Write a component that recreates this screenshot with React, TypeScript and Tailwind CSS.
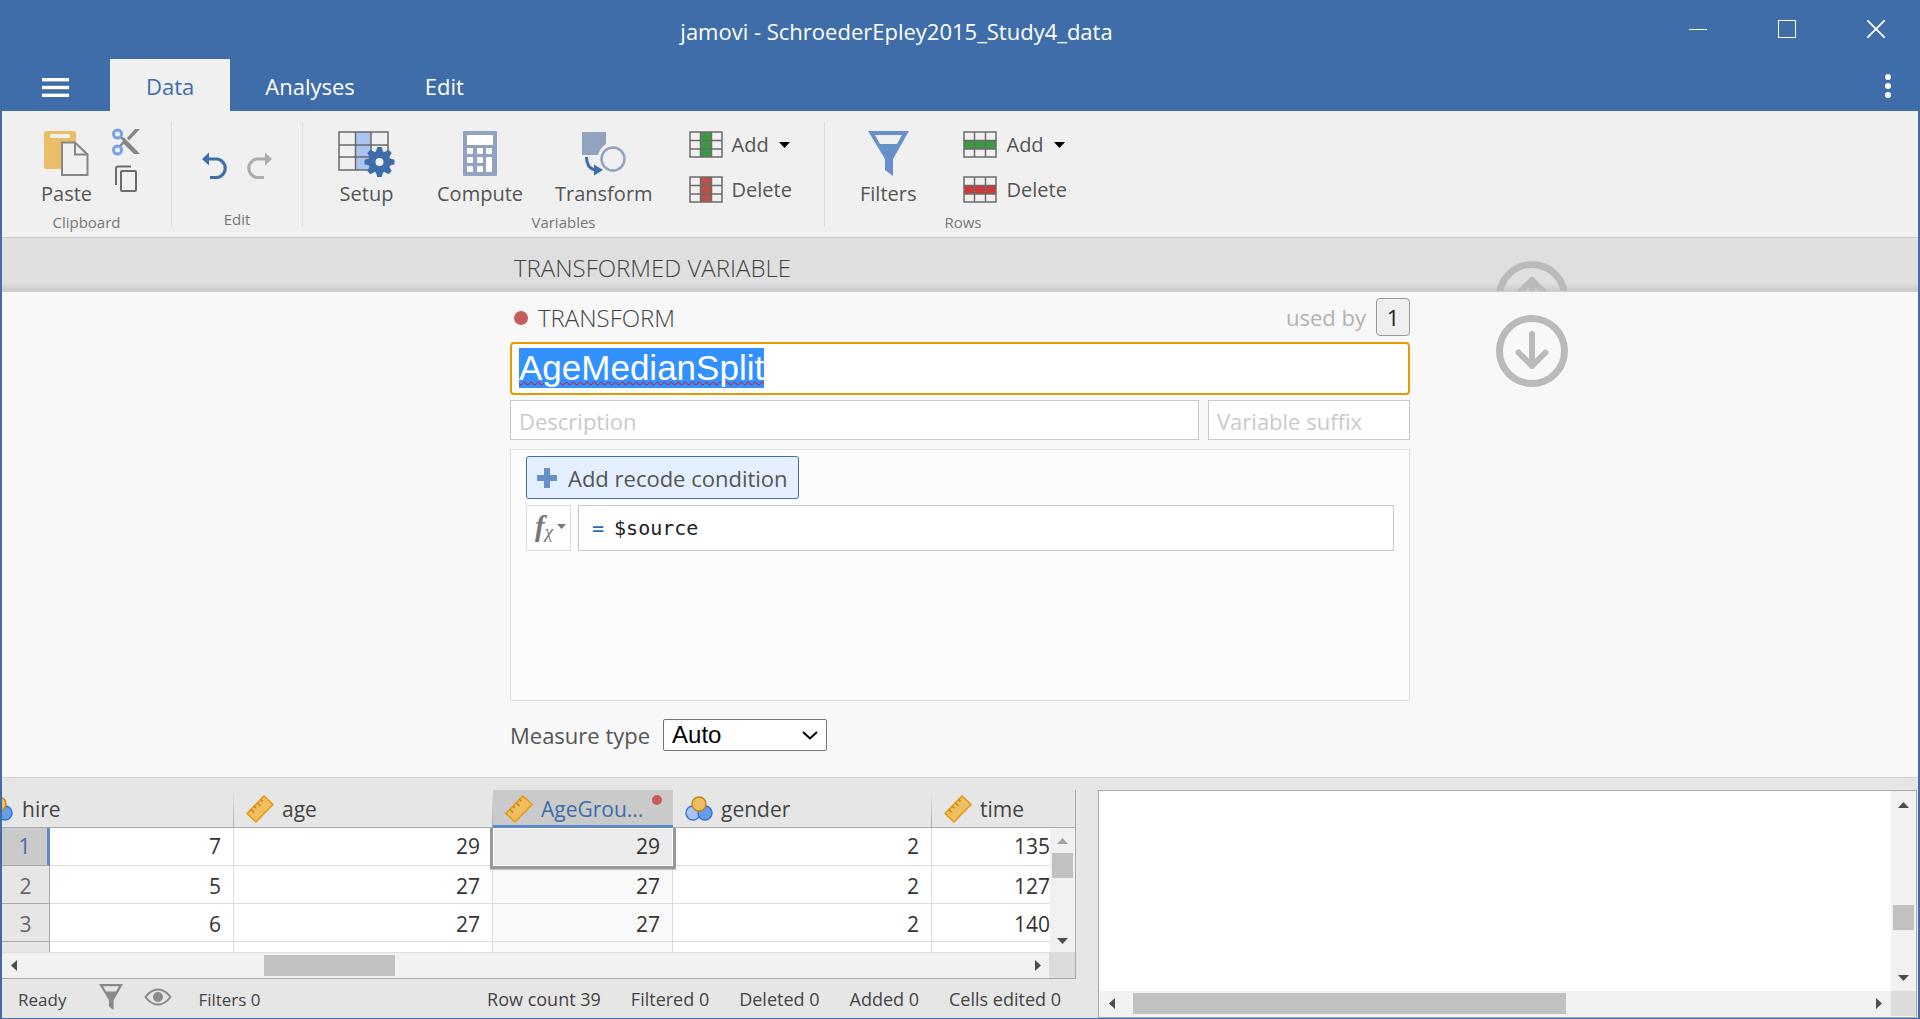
import React, { useEffect, useRef } from "react";

const SANS = "font-['Open_Sans','Noto_Sans',sans-serif]";

/* ---------- icons ---------- */

function PasteIcon() {
  return (
    <svg width="46" height="45" viewBox="0 0 46 45">
      <rect x="0" y="0" width="32" height="38" rx="2" fill="#eabd68" />
      <rect x="6" y="3" width="20" height="4" rx="1" fill="#f4f1ea" />
      <path d="M18 11.500H31L43.500 23.500V44H18Z" fill="#f0f0f0" stroke="#868686" strokeWidth="2" />
      <path d="M31 11.500V23.500H43.500" fill="none" stroke="#868686" strokeWidth="2" />
    </svg>
  );
}

function CutIcon() {
  return (
    <svg width="28" height="28" viewBox="0 0 28 28">
      <path d="M9 8L13 10.500L28 26H22L12 16L9 18.500L7.500 17L11 13L7.500 9.500Z" fill="#868686" />
      <path d="M15 10L23 1H28L17 12.500Z" fill="#868686" />
      <circle cx="5.500" cy="6" r="4" fill="none" stroke="#74a2e6" strokeWidth="3" />
      <circle cx="5.500" cy="22" r="4" fill="none" stroke="#74a2e6" strokeWidth="3" />
    </svg>
  );
}

function CopyIcon() {
  return (
    <svg width="24" height="28" viewBox="0 0 24 28" fill="none" stroke="#6c6c6c" strokeWidth="2">
      <path d="M17 1.500H4Q2 1.500 2 3.500V20" />
      <rect x="7" y="6" width="15" height="20" rx="1" />
    </svg>
  );
}

function UndoIcon({ flip = false }: { flip?: boolean }) {
  const c = flip ? "#acacac" : "#3e6da9";
  return (
    <svg width="27" height="28" viewBox="0 0 27 28">
      <g transform={flip ? "translate(27 0) scale(-1 1)" : undefined}>
        <path d="M5 7H15.500A9.400 9.400 0 0 1 15.500 25.500H8" fill="none" stroke={c} strokeWidth="3.200" />
        <path d="M0 7L7 0.500V13.500Z" fill={c} />
      </g>
    </svg>
  );
}

function SetupIcon() {
  const teeth = [0, 45, 90, 135, 180, 225, 270, 315];
  return (
    <svg width="57" height="46" viewBox="0 0 57 46">
      <rect x="17" y="1" width="16" height="38" fill="#a9c4f0" />
      <path d="M1 1H50V39H1ZM1 14H50M1 26H50M17.500 1V39M33 1V39" fill="none" stroke="#696969" strokeWidth="1.500" />
      <g transform="translate(41.500 31)">
        {teeth.map((a) => (
          <path key={a} d="M-4 -9L-2.200 -15H2.200L4 -9Z" fill="#3e6da9" transform={`rotate(${a})`} />
        ))}
        <circle r="7.500" fill="#f0f0f0" stroke="#3e6da9" strokeWidth="7" />
      </g>
    </svg>
  );
}

function ComputeIcon() {
  return (
    <svg width="34" height="45" viewBox="0 0 34 45">
      <rect width="34" height="45" rx="1" fill="#91a3bf" />
      <g fill="#fff">
        <rect x="4" y="4" width="26" height="10" />
        <rect x="4" y="17" width="6" height="6" rx="1" />
        <rect x="14" y="17" width="6" height="6" rx="1" />
        <rect x="23" y="17" width="6" height="6" rx="1" />
        <rect x="4" y="26" width="6" height="6" rx="1" />
        <rect x="14" y="26" width="6" height="6" rx="1" />
        <rect x="4" y="35" width="6" height="6" rx="1" />
        <rect x="14" y="35" width="6" height="6" rx="1" />
        <rect x="23" y="26" width="6" height="15" rx="1" />
      </g>
    </svg>
  );
}

function TransformIcon() {
  return (
    <svg width="44" height="45" viewBox="0 0 44 45">
      <path d="M0 1H24V13Q18 17 16 24H0Z" fill="#91a3bf" />
      <circle cx="31" cy="28" r="11.500" fill="none" stroke="#91a3bf" strokeWidth="2.500" />
      <path d="M4.500 26Q4.500 37 13 39" fill="none" stroke="#3e6da9" strokeWidth="3" />
      <path d="M12 33.500L21 39L12 44.500Z" fill="#3e6da9" />
    </svg>
  );
}

function ColumnsIcon({ color }: { color: string }) {
  return (
    <svg width="34" height="27" viewBox="0 0 34 27">
      <rect x="12" y="1" width="10" height="25" fill={color} />
      <path d="M1 1H33V26H1ZM1 9.500H33M1 18H33M11.500 1V26M22.500 1V26" fill="none" stroke="#6b6b6b" strokeWidth="1.500" />
    </svg>
  );
}

function RowsIcon({ color }: { color: string }) {
  return (
    <svg width="34" height="27" viewBox="0 0 34 27">
      <rect x="1" y="10" width="32" height="8" fill={color} />
      <path d="M1 1H33V26H1ZM1 9.500H33M1 18H33M11.500 1V26M22.500 1V26" fill="none" stroke="#6b6b6b" strokeWidth="1.500" />
    </svg>
  );
}

function FunnelIcon({ w, h, color }: { w: number; h: number; color: string }) {
  return (
    <svg width={w} height={h} viewBox="0 0 41 45" preserveAspectRatio="none">
      <path fillRule="evenodd" fill={color} d="M0 0H41L25 28V45L17 39V28ZM7 4L12 13H29L34 4Z" />
    </svg>
  );
}

function EyeIcon() {
  return (
    <svg width="28" height="18" viewBox="0 0 28 18">
      <path d="M1.500 9Q7 1.500 14 1.500T26.500 9Q21 16.500 14 16.500T1.500 9Z" fill="none" stroke="#8a8a8a" strokeWidth="2" />
      <circle cx="14" cy="9" r="5" fill="#8a8a8a" />
    </svg>
  );
}

function RulerIcon() {
  return (
    <svg width="28" height="28" viewBox="0 0 28 28" className="shrink-0">
      <path d="M1 18.500L18 1L27 9.500L10 27Z" fill="#f1bd62" stroke="#e59a12" strokeWidth="1.600" strokeLinejoin="round" />
      <path d="M4.800 14.500L8 17.500M8.100 11.200L10 13M11.400 7.900L14.600 11M14.600 4.600L16.500 6.400" stroke="#c98208" strokeWidth="1.400" />
    </svg>
  );
}

function NominalIcon() {
  return (
    <svg width="28" height="26" viewBox="0 0 28 26" className="shrink-0">
      <circle cx="8" cy="17" r="7" fill="#a9c4f5" stroke="#3472d8" strokeWidth="1.400" />
      <circle cx="20" cy="17" r="7" fill="#6a9ce8" stroke="#3472d8" strokeWidth="1.400" />
      <circle cx="14" cy="8" r="7" fill="#f1bd62" stroke="#bf8410" strokeWidth="1.400" />
    </svg>
  );
}

function CircleArrow({ up = false }: { up?: boolean }) {
  return (
    <svg width="72" height="72" viewBox="0 0 72 72" className="block" fill="none" stroke="#bababa">
      <circle cx="36" cy="36" r="32.500" strokeWidth="7" />
      <path
        d="M36 19V51M22.500 37.500L36 51L49.500 37.500"
        strokeWidth="6"
        strokeLinecap="round"
        strokeLinejoin="round"
        transform={up ? "rotate(180 36 35)" : undefined}
      />
    </svg>
  );
}

function Triangle({ dir, color = "#4d4d4d" }: { dir: "up" | "down" | "left" | "right"; color?: string }) {
  const shapes = {
    up: { w: 11, h: 6, d: "M0 6L5.500 0L11 6Z" },
    down: { w: 11, h: 6, d: "M0 0H11L5.500 6Z" },
    left: { w: 6, h: 11, d: "M6 0V11L0 5.500Z" },
    right: { w: 6, h: 11, d: "M0 0V11L6 5.500Z" },
  };
  const s = shapes[dir];
  return (
    <svg width={s.w} height={s.h} viewBox={`0 0 ${s.w} ${s.h}`} className="block shrink-0">
      <path d={s.d} fill={color} />
    </svg>
  );
}

/* ---------- ribbon ---------- */

function BigButton({ label, children }: { label: string; children: React.ReactNode }) {
  return (
    <button className="flex flex-col items-center">
      <span className="flex h-[45px] items-start">{children}</span>
      <span className="mt-1.5 text-[20px] leading-6 text-[#555]">{label}</span>
    </button>
  );
}

function SmallButton({ label, icon, menu = false }: { label: string; icon: React.ReactNode; menu?: boolean }) {
  return (
    <button className="flex h-[27px] items-center text-[20px] leading-[27px] text-[#555]">
      {icon}
      <span className="ml-[9px]">{label}</span>
      {menu && (
        <span className="ml-2.5">
          <Triangle dir="down" color="#000" />
        </span>
      )}
    </button>
  );
}

function GroupLabel({ children }: { children: React.ReactNode }) {
  return <div className="mt-1.5 text-center text-[15px] leading-5 text-[#777]">{children}</div>;
}

function Divider() {
  return <div className="h-[105px] w-px shrink-0 bg-[#dcdcdc]" />;
}

function Ribbon() {
  return (
    <div className="flex border-b border-[#c8c8c8] bg-[#f0f0f0] pt-[11px] pb-[5px]">
      <div className="w-[169px] shrink-0 pt-[9px]">
        <div className="flex pl-[39px]">
          <BigButton label="Paste">
            <PasteIcon />
          </BigButton>
          <div className="-mt-[3px] ml-5 flex flex-col gap-[9px]">
            <button aria-label="Cut">
              <CutIcon />
            </button>
            <button aria-label="Copy" className="pl-[2px]">
              <CopyIcon />
            </button>
          </div>
        </div>
        <GroupLabel>Clipboard</GroupLabel>
      </div>
      <Divider />
      <div className="w-[130px] shrink-0 pt-[9px]">
        <div className="flex h-[72px] items-center justify-center gap-4 pb-[3px]">
          <button aria-label="Undo">
            <UndoIcon />
          </button>
          <button aria-label="Redo">
            <UndoIcon flip />
          </button>
        </div>
        <GroupLabel>Edit</GroupLabel>
      </div>
      <Divider />
      <div className="w-[521px] shrink-0 pt-[9px]">
        <div className="flex pl-[35px]">
          <BigButton label="Setup">
            <SetupIcon />
          </BigButton>
          <div className="ml-[42px]">
            <BigButton label="Compute">
              <ComputeIcon />
            </BigButton>
          </div>
          <div className="ml-8">
            <BigButton label="Transform">
              <TransformIcon />
            </BigButton>
          </div>
          <div className="ml-9 flex flex-col gap-[18px]">
            <SmallButton label="Add" menu icon={<ColumnsIcon color="#3a9a41" />} />
            <SmallButton label="Delete" icon={<ColumnsIcon color="#bd5046" />} />
          </div>
        </div>
        <GroupLabel>Variables</GroupLabel>
      </div>
      <Divider />
      <div className="w-[276px] shrink-0 pt-[9px]">
        <div className="flex pl-[35px]">
          <BigButton label="Filters">
            <FunnelIcon w={41} h={45} color="#6690c8" />
          </BigButton>
          <div className="ml-[47px] flex flex-col gap-[18px]">
            <SmallButton label="Add" menu icon={<RowsIcon color="#3a9a41" />} />
            <SmallButton label="Delete" icon={<RowsIcon color="#d03838" />} />
          </div>
        </div>
        <GroupLabel>Rows</GroupLabel>
      </div>
    </div>
  );
}

/* ---------- title bar and tabs ---------- */

function TitleBar() {
  return (
    <header className="bg-[#3e6da9] text-white">
      <div className="flex h-[59px] items-start pl-[140px]">
        <h1 className="flex-1 pt-[15px] text-center text-[22px] leading-8">jamovi - SchroederEpley2015_Study4_data</h1>
        <div className="flex pt-5">
          <button aria-label="Minimize" className="flex w-[89px] justify-center">
            <svg width="18" height="18" viewBox="0 0 18 18">
              <path d="M0 9.500H18" stroke="#fff" />
            </svg>
          </button>
          <button aria-label="Maximize" className="flex w-[89px] justify-center">
            <svg width="18" height="18" viewBox="0 0 18 18">
              <rect x="0.500" y="0.500" width="17" height="17" fill="none" stroke="#fff" />
            </svg>
          </button>
          <button aria-label="Close" className="flex w-[89px] justify-center">
            <svg width="18" height="18" viewBox="0 0 18 18">
              <path d="M0 0L18 18M18 0L0 18" stroke="#fff" strokeWidth="1.800" />
            </svg>
          </button>
        </div>
      </div>
      <div className="flex h-[52px] text-[22px] leading-[30px]">
        <button aria-label="Menu" className="flex w-[110px] items-center pt-1 pl-[42px]">
          <svg width="27" height="19" viewBox="0 0 27 19" fill="#fff">
            <rect width="27" height="3.400" />
            <rect y="7.800" width="27" height="3.400" />
            <rect y="15.600" width="27" height="3.400" />
          </svg>
        </button>
        <button className="bg-[#f0f0f0] px-9 pt-0.5 text-[#3e6da9]">Data</button>
        <button className="px-[35px] pt-0.5">Analyses</button>
        <button className="px-[35px] pt-0.5">Edit</button>
        <button aria-label="More" className="mr-[29px] ml-auto pt-0.5">
          <svg width="6" height="24" viewBox="0 0 6 24" fill="#fff">
            <circle cx="3" cy="3" r="3" />
            <circle cx="3" cy="12" r="3" />
            <circle cx="3" cy="21" r="3" />
          </svg>
        </button>
      </div>
    </header>
  );
}

/* ---------- transform editor ---------- */

function Editor() {
  const nameRef = useRef<HTMLInputElement>(null);
  useEffect(() => {
    nameRef.current?.focus();
    nameRef.current?.select();
  }, []);

  return (
    <>
      <section className="grid h-[53px] grid-cols-[1fr_900px_1fr] overflow-hidden bg-[linear-gradient(to_bottom,#dfdfdf_84%,#cbcbcb)]">
        <div />
        <h2 className="pt-3.5 pl-1 text-[24px] leading-8 font-light text-[#444]">TRANSFORMED VARIABLE</h2>
        <button aria-label="Previous" className="mt-[23px] ml-[86px] w-[72px] self-start">
          <CircleArrow up />
        </button>
      </section>
      <section className="grid grid-cols-[1fr_900px_1fr] border-y border-[#cfcfcf] bg-[#f8f8f8] pt-1.5 pb-[26px]">
        <div />
        <div>
          <div className="flex h-[38px] items-center">
            <span className="mt-0.5 ml-1 size-3.5 rounded-full bg-[#c75c5c]" />
            <h2 className="mt-0.5 ml-2.5 text-[24px] leading-8 font-light text-[#444]">TRANSFORM</h2>
            <span className="ml-auto text-[22px] leading-8 text-[#b3b3b3]">used by</span>
            <button className="ml-2.5 h-[38px] w-[34px] rounded border border-[#999] bg-[#efefef] text-[22px] text-[#222]">1</button>
          </div>
          <input
            ref={nameRef}
            aria-label="Transform name"
            defaultValue="AgeMedianSplit"
            spellCheck={false}
            className="mt-1.5 block h-[53px] w-full rounded border-2 border-[#e59a00] bg-white pb-0.5 pl-[7px] font-['Liberation_Sans',Arial,sans-serif] text-[35px] text-[#333] outline-none selection:bg-[#3390ff] selection:text-white selection:underline selection:decoration-[#f00] selection:decoration-wavy selection:decoration-1"
          />
          <div className="mt-[5px] flex gap-[9px]">
            <input
              aria-label="Description"
              placeholder="Description"
              className="h-10 min-w-0 flex-1 border border-[#c8c8c8] bg-white px-2 pt-0.5 text-[22px] outline-none placeholder:text-[#cacaca]"
            />
            <input
              aria-label="Variable suffix"
              placeholder="Variable suffix"
              className="h-10 w-[202px] border border-[#c8c8c8] bg-white px-2 pt-0.5 text-[22px] outline-none placeholder:text-[#cacaca]"
            />
          </div>
          <div className="mt-[9px] min-h-[252px] border border-[#dedede] bg-[#fcfcfc] px-[15px] pt-1.5">
            <button className="flex h-[43px] items-center rounded-[3px] border border-[#3e6da9] bg-[#e4f0ff] px-2.5 text-[22px] leading-8 text-[#555]">
              <svg width="20" height="20" viewBox="0 0 20 20">
                <path d="M10 0V20M0 10H20" stroke="#6690c8" strokeWidth="6" />
              </svg>
              <span className="ml-[11px]">Add recode condition</span>
            </button>
            <div className="mt-1.5 flex gap-[7px]">
              <button
                aria-label="Functions"
                className="flex h-[46px] w-[45px] items-center border border-[#dadada] bg-white pb-1 pl-2 font-['Liberation_Serif',serif] text-[#777] italic"
              >
                <span className="text-[29px] leading-8 font-bold">f</span>
                <span className="mt-3 text-[19px] leading-5">χ</span>
                <svg width="9" height="5" viewBox="0 0 9 5" className="ml-1">
                  <path d="M0 0H9L4.500 5Z" fill="#777" />
                </svg>
              </button>
              <label className="flex h-[46px] flex-1 items-center border border-[#c8c8c8] bg-white pl-[13px] font-['DejaVu_Sans_Mono',monospace] text-[20px]">
                <span className="text-[#2b6cb8]">=</span>
                <input aria-label="Formula" defaultValue="$source" className="ml-2.5 min-w-0 flex-1 text-[#222] outline-none" />
              </label>
            </div>
          </div>
          <div className="mt-[18px] flex items-center">
            <label htmlFor="measure" className="text-[22px] leading-8 text-[#555]">
              Measure type
            </label>
            <div className="relative ml-[13px]">
              <select
                id="measure"
                className="h-8 w-[164px] appearance-none rounded-[2px] border border-[#767676] bg-white pl-2 font-['Liberation_Sans',Arial,sans-serif] text-[24px] leading-7 text-black"
              >
                <option>Auto</option>
              </select>
              <svg width="16" height="9" viewBox="0 0 16 9" className="pointer-events-none absolute top-3 right-[9px]">
                <path d="M1 1L8 7.500L15 1" fill="none" stroke="#000" strokeWidth="2" />
              </svg>
            </div>
          </div>
        </div>
        <button aria-label="Next" className="mt-[17px] ml-[86px] w-[72px] self-start">
          <CircleArrow />
        </button>
      </section>
    </>
  );
}

/* ---------- data sheet ---------- */

const rows = [
  ["7", "29", "29", "2", "135"],
  ["5", "27", "27", "2", "127"],
  ["6", "27", "27", "2", "140"],
];

const headSep = "bg-[linear-gradient(to_bottom,transparent,#aaa)] bg-[length:1px_100%] bg-right bg-no-repeat";

function ColumnHead({ icon, name }: { icon: React.ReactNode; name: string }) {
  return (
    <div className="flex h-[37px] items-center overflow-hidden pl-3 text-[21px] leading-8 font-normal text-[#444]">
      {icon}
      <span className="ml-2">{name}</span>
    </div>
  );
}

function DataSheet() {
  return (
    <div className="relative border-r border-[#aaa] bg-white">
      <table className="w-full table-fixed border-separate border-spacing-0">
        <colgroup>
          <col className="w-12" />
          <col className="w-[184px]" />
          <col className="w-[259px]" />
          <col className="w-[180px]" />
          <col className="w-[259px]" />
          <col />
        </colgroup>
        <thead className="bg-[#e6e6e6]">
          <tr>
            <th colSpan={2} className={"border-b border-[#aaa] p-0 " + headSep}>
              <div className="flex h-[37px] items-center overflow-hidden text-[21px] leading-8 font-normal text-[#444]">
                <span className="-ml-[17px]">
                  <NominalIcon />
                </span>
                <span className="ml-[9px]">hire</span>
              </div>
            </th>
            <th className={"border-b border-[#aaa] p-0 " + headSep}>
              <ColumnHead icon={<RulerIcon />} name="age" />
            </th>
            <th className="border-b-3 border-[#5c88c4] bg-[#cacaca] p-0">
              <div className="relative flex h-[35px] items-center pt-0.5 pl-3 text-[21px] leading-8 font-normal text-[#3e6da9]">
                <RulerIcon />
                <span className="ml-2">AgeGrou...</span>
                <span className="absolute top-[5px] right-[11px] size-2.5 rounded-full bg-[#c75c5c]" />
              </div>
            </th>
            <th className={"border-b border-[#aaa] p-0 " + headSep}>
              <ColumnHead icon={<NominalIcon />} name="gender" />
            </th>
            <th className="border-b border-[#aaa] p-0">
              <ColumnHead icon={<RulerIcon />} name="time" />
            </th>
          </tr>
        </thead>
        <tbody className="text-[21px] text-[#333]">
          {rows.map((r, i) => (
            <tr key={i} className={i === 0 ? "leading-[37px]" : "leading-[34px]"}>
              <th
                scope="row"
                className={
                  "px-0 pb-0 text-center font-normal " +
                  (i === 0
                    ? "border-r-3 border-b border-r-[#5c88c4] border-b-[#aaa] bg-[#cacaca] pt-0 text-[#3e6da9]"
                    : "border-r border-b border-[#aaa] bg-[#e6e6e6] pt-[3px] text-[#666]")
                }
              >
                {i + 1}
              </th>
              {r.map((v, j) => (
                <td
                  key={j}
                  className={
                    "relative border-b border-[#ddd] pb-0 pl-0 text-right " +
                    (i === 0 ? "pt-0 " : "pt-[3px] ") +
                    (j === 4 ? "pr-[25px]" : "border-r pr-3") +
                    (j === 2 ? (i === 0 ? " z-10 bg-[#ebebeb]" : " bg-[#f9f9f9]") : "")
                  }
                >
                  {v}
                  {i === 0 && j === 2 && (
                    <span className="absolute top-0 -right-[4px] -bottom-[4px] -left-[3px] border-x-3 border-b-3 border-[#999] shadow-[0_1px_1px_rgba(0,0,0,0.2),inset_0_0_0_1px_#fff]" />
                  )}
                </td>
              ))}
            </tr>
          ))}
          <tr className="h-2.5">
            <th className="border-r border-[#aaa] bg-[#e6e6e6] p-0" />
            <td className="border-r border-[#ddd] p-0" />
            <td className="border-r border-[#ddd] p-0" />
            <td className="border-r border-[#ddd] bg-[#f9f9f9] p-0" />
            <td className="border-r border-[#ddd] p-0" />
            <td className="p-0" />
          </tr>
        </tbody>
      </table>
      <div className="absolute top-[38px] right-0 bottom-[27px] flex w-[25px] flex-col items-center bg-[#f1f1f1] pt-2.5 pb-2">
        <Triangle dir="up" color="#a3a3a3" />
        <div className="mt-[9px] mb-auto h-[25px] w-[21px] bg-[#c1c1c1]" />
        <Triangle dir="down" />
      </div>
      <div className="flex h-[27px] items-center border-t border-b border-t-[#ddd] border-b-[#aaa] bg-[#f1f1f1] pl-[9px]">
        <Triangle dir="left" />
        <div className="ml-[247px] h-[21px] w-[131px] bg-[#c1c1c1]" />
        <div className="ml-auto">
          <Triangle dir="right" />
        </div>
        <div className="ml-2 h-[25px] w-[26px] bg-[#dcdcdc]" />
      </div>
    </div>
  );
}

function StatusBar() {
  return (
    <footer className="flex flex-1 items-center pr-[15px] pl-4 text-[17px] leading-6 text-[#444]">
      <span className="pt-0.5">Ready</span>
      <button aria-label="Filters" className="mb-1 ml-[33px]">
        <FunnelIcon w={24} h={26} color="#8a8a8a" />
      </button>
      <button aria-label="Show filtered rows" className="mb-1 ml-[21px]">
        <EyeIcon />
      </button>
      <span className="ml-[26px] pt-0.5">Filters 0</span>
      <div className="ml-auto flex gap-[30px] text-[18px]">
        <span>Row count 39</span>
        <span>Filtered 0</span>
        <span>Deleted 0</span>
        <span>Added 0</span>
        <span>Cells edited 0</span>
      </div>
    </footer>
  );
}

function ResultsPane() {
  return (
    <div className="mr-px ml-[22px] flex min-w-0 flex-1 flex-col border border-[#aaa] bg-white">
      <div className="flex flex-1">
        <div className="flex-1" />
        <div className="flex w-[25px] flex-col items-center bg-[#f1f1f1] pt-[11px] pb-2.5">
          <Triangle dir="up" />
          <div className="mt-auto mb-[45px] h-[25px] w-[21px] bg-[#c1c1c1]" />
          <Triangle dir="down" />
        </div>
      </div>
      <div className="flex h-[26px] items-center bg-[#f1f1f1] pb-px pl-2.5">
        <Triangle dir="left" />
        <div className="mr-[310px] ml-[18px] h-[21px] flex-1 bg-[#c1c1c1]" />
        <Triangle dir="right" />
        <div className="ml-[9px] h-[25px] w-[25px] bg-[#dcdcdc]" />
      </div>
    </div>
  );
}

export default function App() {
  return (
    <div className={"flex min-h-screen flex-col bg-[#e6e6e6] " + SANS}>
      <TitleBar />
      <main className="flex flex-1 flex-col border-x-2 border-b border-[#3e6da9]">
        <Ribbon />
        <Editor />
        <div className="flex flex-1 pt-3">
          <div className="flex w-[1074px] shrink-0 flex-col">
            <DataSheet />
            <StatusBar />
          </div>
          <ResultsPane />
        </div>
      </main>
    </div>
  );
}
